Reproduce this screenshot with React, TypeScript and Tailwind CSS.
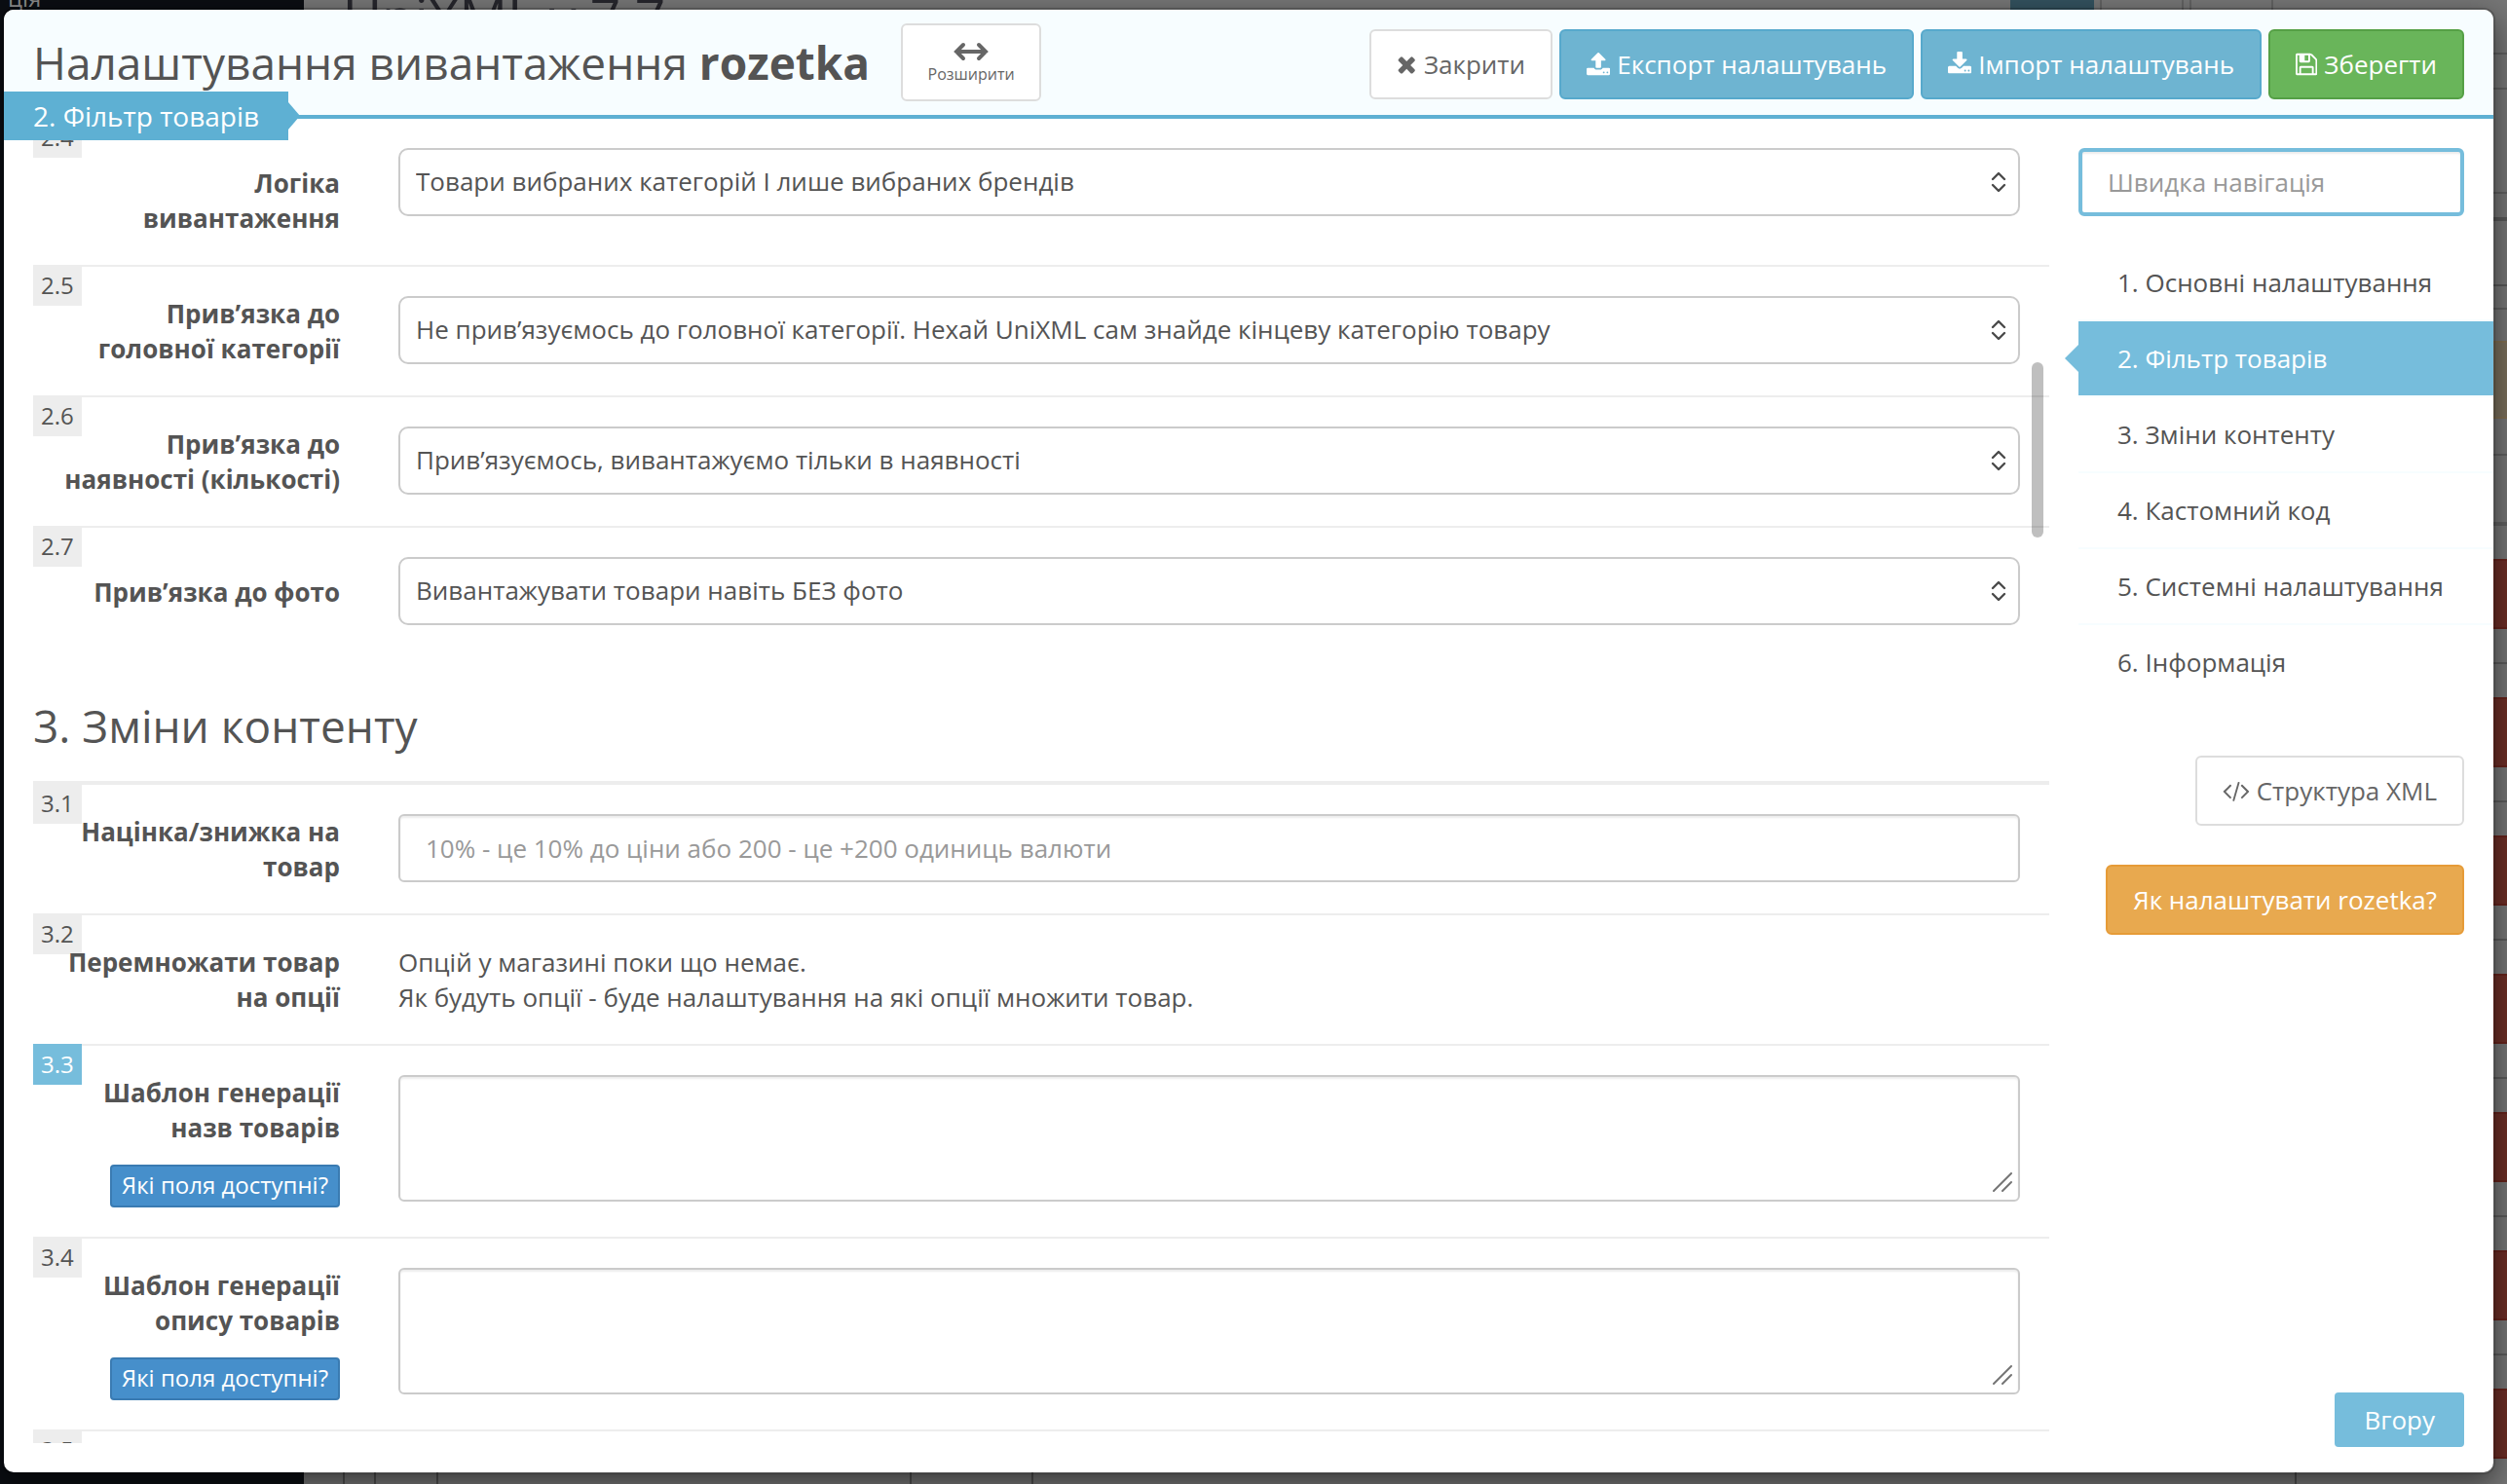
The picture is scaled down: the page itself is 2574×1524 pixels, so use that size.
import { useState } from "react";
import type { ReactNode } from "react";

const ICONS = {
  times: {
    box: "192 0 1408 1792",
    d: "M1490 1322q0 40-28 68l-136 136q-28 28-68 28t-68-28l-294-294-294 294q-28 28-68 28t-68-28l-136-136q-28-28-28-68t28-68l294-294-294-294q-28-28-28-68t28-68l136-136q28-28 68-28t68 28l294 294 294-294q28-28 68-28t68 28l136 136q28 28 28 68t-28 68l-294 294 294 294q28 28 28 68z",
  },
  upload: {
    box: "64 0 1664 1792",
    d: "M1344 1472q0-26-19-45t-45-19-45 19-19 45 19 45 45 19 45-19 19-45zm256 0q0-26-19-45t-45-19-45 19-19 45 19 45 45 19 45-19 19-45zm128-224v320q0 40-28 68t-68 28h-1472q-40 0-68-28t-28-68v-320q0-40 28-68t68-28h427q21 56 70.5 92t110.5 36h256q61 0 110.5-36t70.5-92h427q40 0 68 28t28 68zm-325-648q-17 40-59 40h-256v448q0 26-19 45t-45 19h-256q-26 0-45-19t-19-45v-448h-256q-42 0-59-40-17-39 14-69l448-448q18-19 45-19t45 19l448 448q31 30 14 69z",
  },
  download: {
    box: "64 0 1664 1792",
    d: "M1344 1344q0-26-19-45t-45-19-45 19-19 45 19 45 45 19 45-19 19-45zm256 0q0-26-19-45t-45-19-45 19-19 45 19 45 45 19 45-19 19-45zm128-224v320q0 40-28 68t-68 28h-1472q-40 0-68-28t-28-68v-320q0-40 28-68t68-28h465l135 136q58 56 136 56t136-56l136-136h464q40 0 68 28t28 68zm-325-569q17 41-14 70l-448 448q-18 19-45 19t-45-19l-448-448q-31-29-14-70 17-39 59-39h256v-448q0-26 19-45t45-19h256q26 0 45 19t19 45v448h256q42 0 59 39z",
  },
  save: {
    box: "128 0 1536 1792",
    d: "M512 1536h768v-384h-768v384zm896 0h128v-896q0-14-10-38.500t-20-34.500l-281-281q-10-10-34-20t-39-10v416q0 40-28 68t-68 28h-576q-40 0-68-28t-28-68v-416h-128v1280h128v-416q0-40 28-68t68-28h832q40 0 68 28t28 68v416zm-384-928v-320q0-13-9.500-22.500t-22.500-9.500h-192q-13 0-22.500 9.500t-9.500 22.500v320q0 13 9.500 22.500t22.500 9.500h192q13 0 22.500-9.500t9.500-22.500zm640 32v928q0 40-28 68t-68 28h-1344q-40 0-68-28t-28-68v-1344q0-40 28-68t68-28h928q40 0 88 20t76 48l280 280q28 28 48 76t20 88z",
  },
  code: {
    box: "64 0 1920 1792",
    d: "M681 1399l-50 50q-10 10-23 10t-23-10l-466-466q-10-10-10-23t10-23l466-466q10-10 23-10t23 10l50 50q10 10 10 23t-10 23l-393 393 393 393q10 10 10 23t-10 23zm591-1067l-373 1291q-4 13-15.500 19.500t-23.500 2.500l-62-17q-13-4-19.500-15.500t-2.500-24.500l373-1291q4-13 15.500-19.500t23.500-2.500l62 17q13 4 19.500 15.500t2.500 24.500zm657 651l-466 466q-10 10-23 10t-23-10l-50-50q-10-10-10-23t10-23l393-393-393-393q-10-10-10-23t10-23l50-50q10-10 23-10t23 10l466 466q10 10 10 23t-10 23z",
  },
};

function Icon({ name }: { name: keyof typeof ICONS }) {
  return (
    <svg viewBox={ICONS[name].box} className="h-[26px] w-auto" fill="currentColor" aria-hidden="true">
      <path d={ICONS[name].d} />
    </svg>
  );
}

const BUTTON = "flex h-[72px] items-center gap-[7px] rounded-md border-2 px-[26px] whitespace-nowrap";

const NAV = [
  "1. Основні налаштування",
  "2. Фільтр товарів",
  "3. Зміни контенту",
  "4. Кастомний код",
  "5. Системні налаштування",
  "6. Інформація",
];

interface RowProps {
  num: string;
  label: string;
  htmlFor?: string;
  border?: string;
  labelPad?: string;
  highlight?: boolean;
  hint?: boolean;
  children?: ReactNode;
}

function Row({ num, label, htmlFor, border = "border-t-2", labelPad = "", highlight, hint, children }: RowProps) {
  return (
    <div className={`relative flex gap-[60px] border-[#ededed] py-[30px] pr-[30px] ${border}`}>
      <span
        className={`absolute -top-0.5 left-0 h-[42px] px-2 text-2xl leading-[42px] ${
          highlight ? "bg-[#76bddc] text-white" : "bg-[#ededed]"
        }`}
      >
        {num}
      </span>
      <div className={`flex w-[315px] flex-none flex-col items-end gap-5 ${labelPad}`}>
        <label htmlFor={htmlFor} className="relative text-right font-bold whitespace-pre">
          {label}
        </label>
        {hint && (
          <button className="h-11 rounded-sm border-2 border-[#3a7bb2] bg-[#468fcb] px-2.5 pb-0.5 text-2xl leading-none whitespace-nowrap text-white">
            Які поля доступні?
          </button>
        )}
      </div>
      <div className="min-w-0 flex-1">{children}</div>
    </div>
  );
}

function SelectBox({ id, value }: { id: string; value: string }) {
  return (
    <div className="relative">
      <select
        id={id}
        className="block h-[70px] w-full appearance-none rounded-[10px] border-2 border-[#cbcbcb] bg-white px-4 pb-0.5"
      >
        <option>{value}</option>
      </select>
      <svg
        viewBox="0 0 16 24"
        className="pointer-events-none absolute top-[23px] right-3.5 h-6 w-4"
        fill="none"
        stroke="#4a4a4a"
        strokeWidth="2.4"
        strokeLinecap="round"
        strokeLinejoin="round"
        aria-hidden="true"
      >
        <path d="M2 9l6-6 6 6M2 15l6 6 6-6" />
      </svg>
    </div>
  );
}

function TextBox({ id }: { id: string }) {
  return (
    <div className="relative">
      <textarea
        id={id}
        className="block h-[130px] w-full resize-none rounded-md border-2 border-[#cbcbcb] bg-white px-[26px] py-4 shadow-[inset_0_2px_2px_rgba(0,0,0,0.075)]"
      />
      <svg
        viewBox="0 0 20 20"
        className="pointer-events-none absolute right-2 bottom-2.5 size-5"
        stroke="#757575"
        strokeWidth="2"
        strokeLinecap="round"
        aria-hidden="true"
      >
        <path d="M1 19L19 1M10 19l9-9" />
      </svg>
    </div>
  );
}

function Backdrop() {
  return (
    <div className="absolute inset-0 flex overflow-hidden bg-[#767676]" aria-hidden="true">
      <div className="w-[312px] flex-none bg-[#0b0e13] pl-2 text-2xl leading-6 text-[#8a8a8a]">
        <div className="-mt-3.5">ція</div>
      </div>
      <div className="flex min-w-0 flex-1 flex-col justify-between">
        <div className="flex justify-between pr-[200px] pl-10">
          <div className="-mt-2.5 text-[55px] leading-[54px] text-[#26262c]">UniXML v.7.7</div>
          <div className="flex gap-1.5">
            <div className="h-4 w-[86px] bg-[#33525f]" />
            <div className="h-4 w-[86px] border-x-2 border-[#626262]" />
            <div className="h-4 w-[86px] border-x-2 border-[#626262]" />
          </div>
        </div>
        <div className="flex h-5 pl-10">
          <div className="w-8 border-l-2 border-[#4f4f4f]" />
          <div className="w-16 border-l-2 border-[#4f4f4f]" />
          <div className="w-[486px] border-l-2 border-[#4f4f4f]" />
          <div className="w-[125px] border-l-2 border-[#4f4f4f]" />
          <div className="w-[1297px] border-l-2 border-[#4f4f4f]" />
          <div className="w-16 border-l-2 border-[#4f4f4f]" />
        </div>
      </div>
      <div className="w-10 flex-none">
        <div className="h-14 border-b-2 border-[#606060]" />
        <div className="h-9 border-b-2 border-[#606060]" />
        <div className="h-[107px] border-b-2 border-[#606060]" />
        <div className="h-7 border-b-4 border-[#585858]" />
        <div className="h-[67px] border-b-2 border-[#585858]" />
        <div className="h-6 border-b-2 border-[#606060]" />
        <div className="mt-8 h-20 border-y-2 border-[#806f52] bg-[#7a6f5c]" />
        <div className="h-[38px] border-b-2 border-[#606060]" />
        <div className="h-[72px] border-b-4 border-[#606060]" />
        <div className="h-[34px]" />
        {[0, 1, 2, 3, 4, 5, 6].map((n) => (
          <div key={n}>
            <div className="h-[72px] border-y-2 border-[#66231b] bg-[#6d2e26]" />
            <div className="h-9 border-b-2 border-[#5c5c5c]" />
            <div className="h-[34px]" />
          </div>
        ))}
      </div>
    </div>
  );
}

export default function App() {
  const [active, setActive] = useState(1);

  return (
    <div className="relative h-screen overflow-hidden font-['Open_Sans','Liberation_Sans',sans-serif] text-[26px] leading-9 text-[#545454]">
      <Backdrop />

      <div className="relative h-full pt-2 pr-3 pb-2.5 pl-0.5">
        <div className="flex h-full flex-col rounded-xl border-2 border-black/20 bg-white bg-clip-padding shadow-[0_10px_30px_rgba(0,0,0,0.5)]">
          <header className="relative flex h-28 flex-none items-center justify-between rounded-t-[10px] border-b-4 border-[#5eb0d3] bg-[#f7fdff] px-[30px]">
            <div className="flex items-center gap-8">
              <h1 className="text-[46px] leading-[50px] whitespace-nowrap">
                Налаштування вивантаження <b>rozetka</b>
              </h1>
              <button className="flex h-20 w-36 flex-col items-center justify-center rounded-md border-2 border-[#dddddd] bg-white pt-0.5 text-base leading-6 text-[#666666]">
                <svg
                  viewBox="0 0 36 22"
                  className="h-[22px] w-9"
                  fill="none"
                  stroke="currentColor"
                  strokeWidth="4"
                  strokeLinecap="round"
                  aria-hidden="true"
                >
                  <path d="M3 11h30M10 4l-7 7 7 7M26 4l7 7-7 7" />
                </svg>
                Розширити
              </button>
            </div>
            <div className="mt-1 flex gap-[7px]">
              <button className={`${BUTTON} border-[#dddddd] bg-white text-[#666666]`}>
                <Icon name="times" />
                Закрити
              </button>
              <button className={`${BUTTON} border-[#57a9cc] bg-[#6eb4d1] text-white`}>
                <Icon name="upload" />
                Експорт налаштувань
              </button>
              <button className={`${BUTTON} border-[#57a9cc] bg-[#6eb4d1] text-white`}>
                <Icon name="download" />
                Імпорт налаштувань
              </button>
              <button className={`${BUTTON} border-[#55a046] bg-[#69b55a] text-white`}>
                <Icon name="save" />
                Зберегти
              </button>
            </div>
            <div className="absolute -bottom-[26px] left-0 z-10 flex items-center">
              <span className="bg-[#5eb0d3] px-[30px] text-[28px] leading-[50px] whitespace-nowrap text-white">
                {NAV[active]}
              </span>
              <svg viewBox="0 0 12 28" className="h-7 w-3" fill="#5eb0d3" aria-hidden="true">
                <path d="M0 0l12 14L0 28z" />
              </svg>
            </div>
          </header>

          <div className="flex min-h-0 flex-1 gap-[30px] pl-[30px]">
            <main className="relative mb-[30px] min-w-0 flex-1 overflow-hidden">
              <div className="-mt-0.5">
                <Row num="2.4" label={"Логіка\nвивантаження"} htmlFor="logic" labelPad="pt-[18px]">
                  <SelectBox id="logic" value="Товари вибраних категорій І лише вибраних брендів" />
                </Row>
                <Row num="2.5" label={"Прив’язка до\nголовної категорії"} htmlFor="category">
                  <SelectBox
                    id="category"
                    value="Не прив’язуємось до головної категорії. Нехай UniXML сам знайде кінцеву категорію товару"
                  />
                </Row>
                <Row num="2.6" label={"Прив’язка до\nнаявності (кількості)"} htmlFor="stock">
                  <SelectBox id="stock" value="Прив’язуємось, вивантажуємо тільки в наявності" />
                </Row>
                <Row num="2.7" label="Прив’язка до фото" htmlFor="photo" labelPad="pt-[18px]">
                  <SelectBox id="photo" value="Вивантажувати товари навіть БЕЗ фото" />
                </Row>

                <h2 className="pt-12 pb-8 text-[46px] leading-[50px]">3. Зміни контенту</h2>

                <Row num="3.1" label={"Націнка/знижка на\nтовар"} htmlFor="markup" border="border-t-4">
                  <input
                    id="markup"
                    type="text"
                    placeholder="10% - це 10% до ціни або 200 - це +200 одиниць валюти"
                    className="block h-[70px] w-full rounded-md border-2 border-[#cbcbcb] bg-white px-[26px] shadow-[inset_0_2px_2px_rgba(0,0,0,0.075)] placeholder:text-[#999999]"
                  />
                </Row>
                <Row num="3.2" label={"Перемножати товар\nна опції"}>
                  <p>Опцій у магазині поки що немає.</p>
                  <p>Як будуть опції - буде налаштування на які опції множити товар.</p>
                </Row>
                <Row num="3.3" label={"Шаблон генерації\nназв товарів"} htmlFor="name-template" highlight hint>
                  <TextBox id="name-template" />
                </Row>
                <Row num="3.4" label={"Шаблон генерації\nопису товарів"} htmlFor="text-template" hint>
                  <TextBox id="text-template" />
                </Row>
                <Row num="3.5" label="" />
              </div>
              <div className="absolute top-[250px] right-1.5 h-[180px] w-3 rounded-full bg-black/25" />
            </main>

            <aside className="flex w-[426px] flex-none flex-col pt-[30px] pb-[26px]">
              <div className="pr-[30px]">
                <input
                  type="text"
                  aria-label="Швидка навігація"
                  placeholder="Швидка навігація"
                  className="block h-[70px] w-full rounded-md border-4 border-[#76bddc] bg-white px-[26px] shadow-[inset_0_2px_2px_rgba(0,0,0,0.075)] placeholder:text-[#999999]"
                />
              </div>
              <nav className="mt-[30px]">
                {NAV.map((item, i) => (
                  <a
                    key={item}
                    href={`#section-${i + 1}`}
                    onClick={() => setActive(i)}
                    className={`relative block h-[78px] border-b-2 border-[#f7fdff] bg-clip-padding pl-10 leading-[76px] whitespace-nowrap last:border-b-0 ${
                      i === active ? "bg-[#76bddc] text-white" : ""
                    }`}
                  >
                    {i === active && (
                      <svg viewBox="0 0 14 28" className="absolute top-6 -left-3.5 h-7 w-3.5" fill="#76bddc" aria-hidden="true">
                        <path d="M14 0L0 14l14 14z" />
                      </svg>
                    )}
                    {item}
                  </a>
                ))}
              </nav>
              <div className="mt-14 flex flex-col items-end gap-10 pr-[30px]">
                <button className={`${BUTTON} border-[#dddddd] bg-white text-[#666666]`}>
                  <Icon name="code" />
                  Структура XML
                </button>
                <button className={`${BUTTON} border-[#e69b37] bg-[#e8a94f] text-white`}>Як налаштувати rozetka?</button>
              </div>
              <button className="mt-auto mr-[30px] h-14 self-end rounded-sm bg-[#76bddc] px-[30px] text-white">Вгору</button>
            </aside>
          </div>
        </div>
      </div>
    </div>
  );
}
